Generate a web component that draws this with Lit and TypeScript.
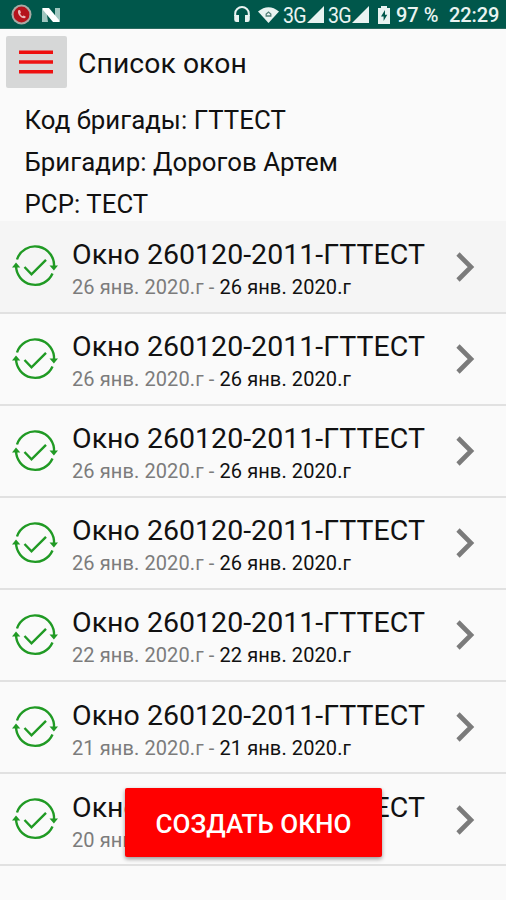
import { LitElement, html, css } from "lit";
import { customElement, property } from "lit/decorators.js";

const face = css`
  :host { font-family: Roboto, "Noto Sans", sans-serif; box-sizing: border-box; }
  * { box-sizing: border-box; }
  svg { display: block; flex: none; }
`;

@customElement("status-bar")
class StatusBar extends LitElement {
  static styles = [face, css`
    :host { display: block; height: 29px; background: #00574b; border-bottom: 1px solid #2b6a60; color: #e9f3f1; }
    .bar { display: flex; align-items: center; height: 29px; padding: 0 7px 0 11px; }
    .nova { margin: 1px 0 0 10px; }
    .space { flex: 1; }
    .net { font-size: 22.5px; line-height: 29px; letter-spacing: -0.9px; transform: scaleX(0.87); transform-origin: left; width: 22px; padding-top: 1px; }
    .wifi { margin: 0 4px 0 8px; }
    .second { margin-left: 4px; }
    .cell { margin-left: 2px; }
    .battery { margin: 1px 6px 0 9px; }
    .value { font-size: 20px; font-weight: 500; line-height: 29px; white-space: pre; padding-top: 2px; }
    .pct { width: 53px; }
    .time { width: 50px; letter-spacing: -0.1px; }
  `];
  signal() {
    return html`<svg class="cell" width="17" height="17" viewBox="0 0 17 17"><path d="M17 0V17H0Z" fill="#e9f3f1"/></svg>`;
  }
  render() {
    return html`<div class="bar">
      <svg width="21" height="21" viewBox="0 0 21 21">
        <circle cx="10.5" cy="10.5" r="10" fill="#a9aaa5"/>
        <circle cx="10.5" cy="10.5" r="7.9" fill="#b5141c"/>
        <path d="M7.2 6.2C5.8 9.8 10.2 15 14.3 14.1L14.7 12.4L12.5 11.4L11.3 12.2Q9.5 11.1 9.2 9.4L10 8.4L9 6Z" fill="#eab9b8"/>
      </svg>
      <svg class="nova" width="18" height="14" viewBox="0 0 18 14">
        <path d="M0 0H4L6 14H0ZM18 0H13V14H18Z" fill="#9fc6bf"/>
        <path d="M1 0H7L17 12V14H11L1 2Z" fill="#fff"/>
      </svg>
      <span class="space"></span>
      <svg width="16" height="17" viewBox="0 0 16 17">
        <path d="M1.2 10V7.5A6.8 6.5 0 0 1 14.8 7.5V10" fill="none" stroke="#e9f3f1" stroke-width="2"/>
        <path d="M.2 9H5V16H2.5Q.2 16 .2 13.5ZM11 9H15.8V13.5Q15.8 16 13.5 16H11Z" fill="#e9f3f1"/>
      </svg>
      <svg class="wifi" width="21" height="16" viewBox="0 0 21 16">
        <path d="M0 4.5Q10.5 -4 21 4.5L10.5 16Z" fill="#e9f3f1"/>
        <path d="M8.2 9V7L10.5 5L12.8 7V9Z" fill="none" stroke="#527f77" stroke-width="1.3"/>
      </svg>
      <span class="net">3G</span>${this.signal()}
      <span class="net second">3G</span>${this.signal()}
      <svg class="battery" width="12" height="18" viewBox="0 0 12 18">
        <path d="M3 0H9V2H12V18H0V2H3Z" fill="#e9f3f1"/>
        <path d="M7 4L3 10.5H5.6V15L9.3 8.7H7Z" fill="#00574b"/>
      </svg>
      <span class="value pct">97 %</span>
      <span class="value time">22:29</span>
    </div>`;
  }
}

@customElement("window-row")
class WindowRow extends LitElement {
  @property() name = "";
  @property() day = "";
  static styles = [face, css`
    :host { display: flex; height: 92.15px; border-bottom: 2px solid #e1e1e1; padding: 0 31px 0 12px; }
    .state { margin-top: 22px; }
    .text { flex: 1; padding: 15.5px 0 0 14px; white-space: nowrap; }
    .name { font-size: 28.5px; line-height: 36px; color: #111; letter-spacing: 0.03px; }
    .dates { font-size: 20px; line-height: 29px; color: #7c7c7c; letter-spacing: 0.1px; }
    .end { color: #111; }
    .arrow { margin-top: 30.4px; }
  `];
  render() {
    return html`
      <svg class="state" width="46" height="46" viewBox="0 0 46 46">
        <g fill="none" stroke="#209a24" stroke-width="2.4">
          <path d="M5 16.5A19 19 0 0 1 42 24"/>
          <path d="M4.1 22.5A19 19 0 0 0 40.5 30.5"/>
          <path d="M12.5 24L19.5 31.3L34 16.8"/>
        </g>
        <path d="M0 24.5L4 19.5L8.3 24.5ZM37.5 22.5H46L41.9 27.5Z" fill="#209a24"/>
      </svg>
      <div class="text">
        <div class="name">${this.name}</div>
        <div class="dates">${this.day} - <span class="end">${this.day}</span></div>
      </div>
      <svg class="arrow" width="19" height="30" viewBox="0 0 19 30">
        <path d="M2 2L15 15L2 28" fill="none" stroke="#7b7b7b" stroke-width="4.6"/>
      </svg>`;
  }
}

@customElement("app-root")
class AppRoot extends LitElement {
  days = ["26", "26", "26", "26", "22", "21", "20"];
  static styles = [face, css`
    :host { display: block; position: relative; height: 900px; overflow: hidden; background: #fafafa; color: #111; }
    .header { display: flex; align-items: center; height: 70px; padding-left: 6px; }
    .menu { display: flex; align-items: center; justify-content: center; width: 61px; height: 52px; margin-top: -4px; background: #d6d7d7; border: 0; border-radius: 2px; padding: 0 1px 0 0; }
    .title { margin: -1px 0 0 11px; font-size: 28.3px; line-height: 36px; letter-spacing: 0.08px; }
    .info { display: flex; flex-direction: column; gap: 10.2px; padding: 5px 0 1.2px 24.5px; font-size: 25.8px; line-height: 32px; letter-spacing: 0.05px; white-space: nowrap; }
    .list { margin-top: -0.2px; }
    .current { background: #f5f5f5; }
    .create { position: absolute; left: 125px; bottom: 43px; width: 257px; height: 69px; padding: 2px 0 0; border: 0; border-radius: 2px; background: #f00; color: #fff; font: 500 26px/36px Roboto, sans-serif; white-space: nowrap; box-shadow: 0 2px 4px rgba(0,0,0,.4); }
  `];
  render() {
    return html`
      <status-bar></status-bar>
      <div class="header">
        <button class="menu" aria-label="Меню">
          <svg width="34" height="24" viewBox="0 0 34 24"><path d="M0 2.2H34M0 12H34M0 21.8H34" stroke="#ee1010" stroke-width="3.6"/></svg>
        </button>
        <span class="title">Список окон</span>
      </div>
      <div class="info">
        <div>Код бригады: ГТТЕСТ</div>
        <div>Бригадир: Дорогов Артем</div>
        <div>РСР: ТЕСТ</div>
      </div>
      <div class="list">
        ${this.days.map((d, i) => html`<window-row class=${i ? "" : "current"} name="Окно 260120-2011-ГТТЕСТ" day="${d} янв. 2020.г"></window-row>`)}
      </div>
      <button class="create">СОЗДАТЬ ОКНО</button>`;
  }
}
